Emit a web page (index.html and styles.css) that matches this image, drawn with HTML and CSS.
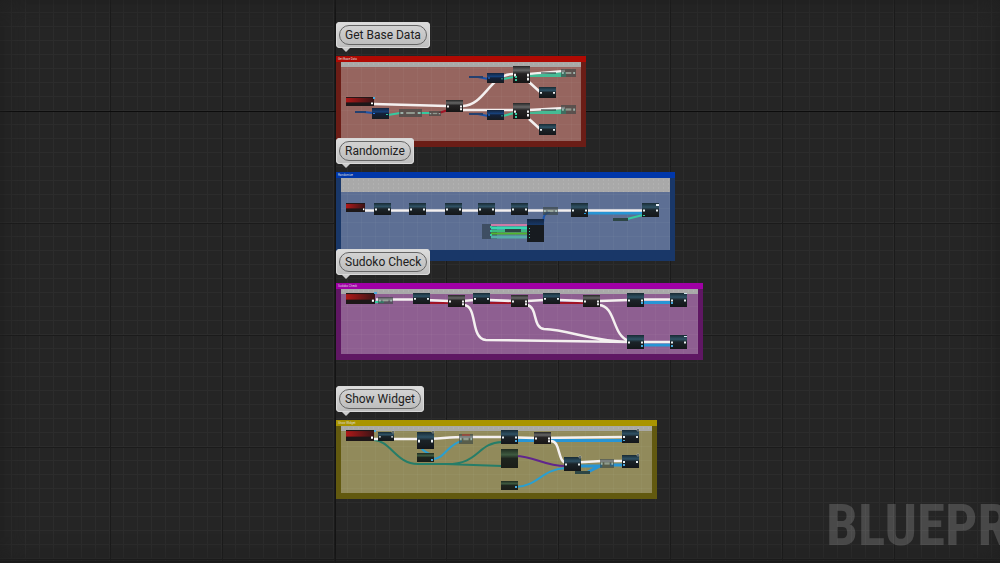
FILE: index.html
```html
<!DOCTYPE html>
<html lang="en">
<head>
<meta charset="utf-8">
<title>Blueprint graph</title>
<link rel="stylesheet" href="styles.css">
</head>
<body>
<svg class="defs" aria-hidden="true">
  <defs>
    <linearGradient id="gb" x2="0" y2="1"><stop offset="0" stop-color="#182a33"/><stop offset=".3" stop-color="#2f5265"/><stop offset=".5" stop-color="#1b2328"/><stop offset="1" stop-color="#14171a"/></linearGradient>
    <linearGradient id="gk" x2="0" y2="1"><stop offset="0" stop-color="#262626"/><stop offset=".25" stop-color="#666"/><stop offset=".45" stop-color="#252324"/><stop offset="1" stop-color="#171515"/></linearGradient>
    <linearGradient id="gu" x2="0" y2="1"><stop offset="0" stop-color="#14233c"/><stop offset=".35" stop-color="#174079"/><stop offset=".5" stop-color="#14213a"/><stop offset="1" stop-color="#171b20"/></linearGradient>
    <linearGradient id="gg" x2="0" y2="1"><stop offset="0" stop-color="#202c20"/><stop offset=".3" stop-color="#3e5a40"/><stop offset=".5" stop-color="#1e241e"/><stop offset="1" stop-color="#1b1d18"/></linearGradient>
    <linearGradient id="gr" x2="1" y2="0"><stop offset="0" stop-color="#b01818"/><stop offset="1" stop-color="#3a1416"/></linearGradient>
    <symbol id="blue" viewBox="0 0 17 13" preserveAspectRatio="none"><rect width="17" height="13" fill="url(#gb)"/><path d="M1 6h2v2H1zM14 6h2v2h-2z" fill="#e8eef0"/></symbol>
    <symbol id="black" viewBox="0 0 17 13" preserveAspectRatio="none"><rect width="17" height="13" fill="url(#gk)"/><path d="M1 6h2v2H1zM14 6h2v2h-2zM14 9h2v2h-2z" fill="#eee"/></symbol>
    <symbol id="navy" viewBox="0 0 17 11" preserveAspectRatio="none"><rect width="17" height="11" fill="url(#gu)"/><path d="M1 5h2v1H1z" fill="#2674e8"/><path d="M14 6h2v1h-2z" fill="#35c9a2"/></symbol>
    <symbol id="green" viewBox="0 0 17 10" preserveAspectRatio="none"><rect width="17" height="10" fill="url(#gg)"/></symbol>
    <symbol id="event" viewBox="0 0 28 10" preserveAspectRatio="none"><rect width="28" height="10" fill="#1d1718"/><rect y="1" width="28" height="5" fill="url(#gr)"/><path d="M25 6h2v2h-2z" fill="#fff"/></symbol>
    <symbol id="chip" viewBox="0 0 16 8" preserveAspectRatio="none"><rect width="16" height="8" fill="#3b4544" fill-opacity=".65"/><path d="M5 3h6v2H5z" fill="#a7b7a9" fill-opacity=".7"/><path d="M1 3h2v2H1zM13 3h2v2h-2z" fill="#b8d8d0" fill-opacity=".7"/></symbol>
  </defs>
</svg>
<main class="canvas">
  <div class="watermark">BLUEPR</div>

  <section class="group base">
    <h2 class="bubble"><span class="pill">Get Base Data</span></h2>
    <div class="comment">
      <p class="title">Get Base Data</p>
      <div class="body"><div class="strip"></div>
      <svg class="graph" viewBox="341 62 240 79">
        <g class="wire exec thin"><path d="M374 104L447 106M463 106C485 105 490 74 513 74M463 110H514M529 74L565 71M529 110L565 108M529 82L540 92M529 119L540 129"/></g>
        <g class="wire teal"><path d="M388 115L400 113M418 113H430M503 79L514 77M503 116L514 113"/></g>
        <path class="mint" d="M529 75L566 72V77H529zM529 112L566 109V114H529z"/>
        <path class="wire red" d="M439 113L448 110"/>
        <path class="wire cobalt" d="M364 112L373 113M478 77L488 79M478 114L488 116"/>
        <path class="pin-bar navy-bar" d="M355 111h11v2h-11zM469 76h14v2h-14zM469 113h14v2h-14z"/><path class="pin-bar soft" d="M541 72h15v2h-15zM541 109h15v2h-15z"/>
        <use href="#event" x="346" y="97" width="28" height="9"/><rect class="dot" x="373" y="97" width="2" height="2"/>
        <use href="#navy" x="372" y="108" width="17" height="11"/>
        <use href="#chip" x="399" y="109" width="23" height="8"/><use href="#chip" x="429" y="111" width="12" height="5"/>
        <use href="#black" x="446" y="100" width="17" height="12"/>
        <use href="#navy" x="487" y="73" width="17" height="10"/><use href="#navy" x="487" y="110" width="17" height="10"/>
        <use href="#black" x="513" y="66" width="17" height="17"/><use href="#black" x="513" y="103" width="17" height="16"/>
        <use href="#blue" x="539" y="87" width="17" height="11"/><use href="#blue" x="539" y="124" width="17" height="11"/>
        <use href="#chip" x="561" y="69" width="15" height="8"/><use href="#chip" x="561" y="105" width="15" height="9"/>
        <path class="aqua" d="M515 76h2v2h-2zM515 79h2v2h-2zM515 113h2v2h-2zM515 116h2v2h-2z"/>
      </svg></div>
    </div>
  </section>

  <section class="group random">
    <h2 class="bubble"><span class="pill">Randomize</span></h2>
    <div class="comment">
      <p class="title">Randomize</p>
      <div class="body"><div class="strip"></div>
      <svg class="graph" viewBox="341 178 329 72">
        <path class="wire sky" d="M586 213H643"/>
        <path class="wire exec thin" d="M364 210.500H644"/>
        <path class="wire teal" d="M627 219L643 215"/>
        <path class="wire cobalt" d="M541 225C546 222 540 214 550 212"/>
        <rect class="box" x="482" y="224" width="15" height="15"/>
        <path stroke="#cf7aa6" stroke-width="2" d="M491 225H528"/><path stroke="#39d9b0" stroke-width="3" d="M491 228H528"/><path stroke="#3aba80" stroke-width="2" d="M491 231H528"/><path stroke="#50b82c" stroke-width="2" d="M491 233.500H528"/><path stroke="#55aca8" stroke-width="3" d="M491 237H528"/>
        <rect class="pin-bar" x="505" y="229" width="16" height="3"/><rect class="pin-bar" x="613" y="218" width="15" height="3"/>
        <use href="#event" x="346" y="203" width="19" height="9"/>
        <use href="#blue" x="374" y="203" width="17" height="12"/><use href="#blue" x="409" y="203" width="17" height="12"/><use href="#blue" x="445" y="203" width="17" height="12"/><use href="#blue" x="478" y="203" width="17" height="12"/><use href="#blue" x="511" y="203" width="17" height="12"/>
        <use href="#chip" x="543" y="207" width="15" height="8"/>
        <use href="#blue" x="571" y="203" width="17" height="14"/><use href="#blue" x="642" y="203" width="17" height="14"/>
        <use href="#navy" x="527" y="219" width="17" height="23"/>
        <rect x="527" y="225" width="17" height="17" fill="#171b20"/>
        <path class="aqua" d="M529 228h1v1h-1zM529 231h1v1h-1zM529 234h1v1h-1zM529 237h1v1h-1zM490 226h2v2h-2zM490 230h2v2h-2zM490 234h2v2h-2zM643 215h2v1h-2z"/>
        <rect x="656" y="204" width="3" height="2" fill="#e8eef4"/><rect x="584" y="213" width="2" height="1" fill="#259ee0"/>
      </svg></div>
    </div>
  </section>

  <section class="group sudoku">
    <h2 class="bubble"><span class="pill">Sudoko Check</span></h2>
    <div class="comment">
      <p class="title">Sudoko Check</p>
      <div class="body"><div class="strip"></div>
      <svg class="graph" viewBox="341 289 357 65">
        <path class="wire red" d="M429 303H449M489 303H513M559 303H584"/>
        <path class="wire exec thin" d="M376 299.500H414L449 301H463L474 300H489L513 301H527L544 300H559L584 301H599L629 300"/>
        <path class="wire exec thin" d="M464 305C478 306 470 339 486 340L629 342M527 305C538 307 532 327 544 329C570 330 590 341 629 342M599 305C616 306 612 336 629 341"/>
        <path class="wire sky" d="M643 302.500H671M643 345H671"/><path class="wire exec thin" d="M643 299.500H671M643 342H671"/>
        <path class="wire teal" d="M374 302H384"/>
        <use href="#event" x="346" y="293" width="29" height="11"/><rect class="dot" x="374" y="292" width="3" height="2"/>
        <use href="#chip" x="378" y="297" width="15" height="7"/>
        <use href="#blue" x="413" y="293" width="17" height="11"/><use href="#black" x="448" y="295" width="17" height="12"/>
        <use href="#blue" x="473" y="293" width="17" height="11"/><use href="#black" x="511" y="295" width="17" height="12"/>
        <use href="#blue" x="543" y="293" width="17" height="11"/><use href="#black" x="583" y="295" width="17" height="12"/>
        <use href="#blue" x="627" y="293" width="17" height="14"/><use href="#blue" x="670" y="293" width="17" height="14"/>
        <use href="#blue" x="627" y="335" width="17" height="14"/><use href="#blue" x="670" y="335" width="17" height="14"/>
        <path class="dot" d="M641 302h2v2h-2zM671 302h2v2h-2zM641 345h2v2h-2zM671 345h2v2h-2z"/>
        <path d="M684 293h3v1h-3zM684 336h3v1h-3z" fill="#cfe4ed"/>
      </svg></div>
    </div>
  </section>

  <section class="group widget">
    <h2 class="bubble"><span class="pill">Show Widget</span></h2>
    <div class="comment">
      <p class="title">Show Widget</p>
      <div class="body"><div class="strip"></div>
      <svg class="graph" viewBox="341 426 311 67">
        <path class="wire sea" d="M374 440C391 441 396 464 418 464H445C480 465 476 443 502 442M445 464L502 466"/>
        <path class="wire blue-line" d="M420 443C421 455 432 450 431 459C445 460 447 444 462 441M516 487C538 486 542 469 566 468"/>
        <path class="wire violet" d="M515 456C535 456 543 466 566 466"/>
        <path class="wire sky" d="M517 440.500H535M550 440.500H624M580 466H602M588 472L602 465M610 465H624"/>
        <path class="wire exec thin" d="M373 439H420C440 439 447 437 466 437H502L535 438L624 437M551 441C561 441 557 463 567 463L602 461H624"/>
        <use href="#event" x="346" y="430" width="28" height="11"/><rect class="dot" x="374" y="430" width="2" height="2"/>
        <use href="#blue" x="378" y="432" width="16" height="9"/><use href="#blue" x="417" y="432" width="17" height="17"/>
        <use href="#green" x="417" y="453" width="17" height="9"/><use href="#chip" x="459" y="434" width="14" height="10"/><path stroke="#c93b31" d="M462 435h8"/>
        <use href="#blue" x="501" y="430" width="17" height="14"/><use href="#black" x="534" y="432" width="17" height="12"/>
        <use href="#green" x="501" y="449" width="17" height="19"/><use href="#green" x="501" y="481" width="17" height="9"/>
        <use href="#blue" x="564" y="457" width="17" height="14"/><rect class="pin-bar" x="575" y="471" width="15" height="3"/>
        <use href="#chip" x="600" y="459" width="14" height="9"/>
        <use href="#blue" x="622" y="430" width="17" height="13"/><use href="#blue" x="622" y="455" width="17" height="13"/>
        <path class="dot" d="M515 440h2v2h-2zM515 486h2v2h-2zM431 459h2v2h-2zM623 440h2v1h-2zM623 464h2v2h-2z"/>
        <path d="M637 429h2v2h-2zM637 454h2v2h-2zM579 456h2v2h-2zM432 431h2v2h-2zM392 431h2v2h-2z" fill="#242c2d" stroke="#bcc4c2" stroke-width=".5"/>
      </svg></div>
    </div>
  </section>
</main>
</body>
</html>
```
FILE: styles.css
```css
* { box-sizing: border-box; }
body { margin: 0; background: #252525; font-family: Roboto, "Liberation Sans", sans-serif; }
.defs { position: absolute; width: 0; height: 0; }
.canvas {
  position: relative;
  min-height: 100vh;
  overflow: hidden;
  background:
    linear-gradient(#0c0c0c, #0c0c0c) 0 111px / 100% 1px no-repeat,
    linear-gradient(#141414, #141414) 335px 0 / 1px 100% no-repeat,
    linear-gradient(#191919, #191919) 0 100% / 100% 2px no-repeat,
    repeating-linear-gradient(90deg, transparent 0 110px, #1b1b1b 110px 111px, transparent 111px 112px),
    repeating-linear-gradient(transparent 0 111px, #1b1b1b 111px 112px),
    linear-gradient(90deg, #2c2c2c 1px, transparent 1px) 11px 0 / 14px 14px,
    linear-gradient(#2c2c2c 1px, transparent 1px) 0 12px / 14px 14px,
    #252525;
  box-shadow: inset 0 0 24px #1f1f1f;
}
.watermark {
  position: absolute;
  left: 826px;
  top: 494px;
  font: bold 57px/64px "Roboto Condensed", Roboto, sans-serif;
  color: rgb(255 255 255 / 17%);
  white-space: nowrap;
}
.group { position: absolute; left: 336px; }
.base { top: 22px; width: 250px; --head: #b00a03; --edge: #6b1d16; --fill: #96655f; --strip: #a9a9a7; --strip-h: 5px; --grid-y: 6px; }
.random { top: 138px; width: 339px; --head: #0037aa; --edge: #193768; --fill: #5d6f94; --strip: #a9a9a9; --strip-h: 14px; --grid-y: 2px; }
.sudoku { top: 249px; width: 367px; --head: #a000a5; --edge: #5f1763; --fill: #8e5f91; --strip: #a9a9a9; --strip-h: 5px; --grid-y: 3px; }
.widget { top: 386px; width: 321px; --head: #a99400; --edge: #62590f; --fill: #918a5b; --strip: #a9a9a5; --strip-h: 5px; --grid-y: 6px; }
.bubble {
  position: relative;
  width: max-content;
  margin: 0 0 8px;
  padding: 3px;
  border-radius: 4px;
  background: linear-gradient(#dedede, #bdbdbd);
  box-shadow: inset 0 0 0 1px #d9d9d9;
}
.bubble::after {
  content: "";
  position: absolute;
  left: 6px;
  top: 100%;
  border: 4px solid transparent;
  border-top-color: #cbcbcb;
  border-bottom: 0;
}
.pill {
  display: block;
  padding: 0 5px;
  border: 1px solid #666;
  border-radius: 10px;
  background: linear-gradient(#d2d2d2, #bebebe);
  color: #202020;
  font-size: 12px;
  font-weight: 400;
  line-height: 18px;
}
.comment { padding-bottom: 6px; background: var(--edge); }
.random .comment { padding-bottom: 11px; }
.title {
  margin: 0;
  padding-left: 2px;
  background: var(--head);
  color: #ddd;
  font-size: 3px;
  line-height: 6px;
}
.body {
  display: grid;
  margin: 0 5px;
  background:
    linear-gradient(90deg, rgb(255 255 255 / 3%) 1px, transparent 1px) 6px 0 / 14px 14px,
    linear-gradient(rgb(255 255 255 / 3%) 1px, transparent 1px) 0 var(--grid-y) / 14px 14px,
    var(--fill);
}
.body > * { grid-area: 1 / 1; }
.strip {
  height: var(--strip-h);
  background:
    radial-gradient(circle, rgb(255 255 255 / 9%) 1px, transparent 1px) 0 0 / 5px 4px,
    var(--strip);
}
.graph { display: block; width: 100%; }
.wire { fill: none; stroke-width: 2; }
.exec { stroke: #f4f0f0; stroke-width: 3; }
.thin { stroke-width: 2.5; }
.teal { stroke: #35caa0; }
.mint, .aqua { fill: #37c99e; }
.mint { fill-opacity: .85; }
.red { stroke: #a01325; }
.cobalt { stroke: #1b55ac; }
.sky { stroke: #2795d5; stroke-width: 3; }
.sea { stroke: #267d68; }
.blue-line { stroke: #2a9fd0; }
.violet { stroke: #60258d; }
.pin-bar { fill: #2d4645; }
.navy-bar { fill: #24406f; }
.soft { fill-opacity: .6; }
.box { fill: #3e4e63; }
.dot { fill: #4ba9dc; }
```
